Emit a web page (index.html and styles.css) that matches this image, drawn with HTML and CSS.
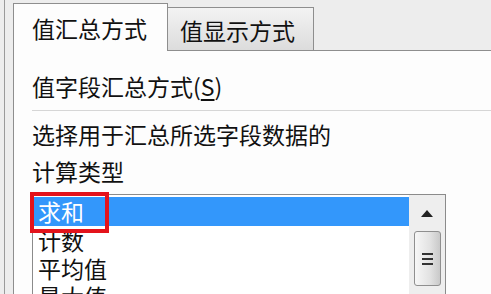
FILE: index.html
```html
<!DOCTYPE html>
<html lang="zh-CN">
<head>
    <meta charset="UTF-8">
    <title>值字段设置</title>
    <link rel="stylesheet" href="styles.css">
</head>
<body>

    <div class="window">
        <div class="tabs">
            <div class="tab tab-active">值汇总方式</div>
            <div class="tab tab-off">值显示方式</div>
            <div class="tab-fill"></div>
        </div>

        <div class="panel">
            <div class="label">值字段汇总方式(<u>S</u>)</div>
            <div class="sep"></div>
            <div class="desc">选择用于汇总所选字段数据的<br>计算类型</div>

            <div class="listbox">
                <div class="items">
                    <div class="item selected">求和</div>
                    <div class="item">计数</div>
                    <div class="item">平均值</div>
                    <div class="item">最大值</div>
                </div>
                <div class="scrollbar">
                    <div class="arrow-up">
                        <svg width="12" height="7" viewBox="0 0 12 7"><path d="M0 7 L6 0 L12 7 Z" fill="#222"/></svg>
                    </div>
                    <div class="thumb">
                        <span></span><span></span><span></span>
                    </div>
                </div>
                <div class="mark"></div>
            </div>
        </div>
    </div>

</body>
</html>
```

FILE: styles.css
```css
body {
    margin: 0;
    padding: 0;
    background-color: #ededed;
    font-family: "Microsoft YaHei", "Noto Sans CJK SC", sans-serif;
    font-size: 23px;
    color: #111;
    width: 491px;
    height: 294px;
    overflow: hidden;
}

.window {
    margin-left: 4px;
    border-left: 1px solid #9a9a9a;
    padding-left: 8px;
    height: 294px;
    display: flex;
    flex-direction: column;
}

.tabs {
    display: flex;
    align-items: flex-end;
    padding-top: 3px;
    height: 48px;
}

.tab {
    box-sizing: border-box;
    line-height: 1;
}

.tab-active {
    width: 155px;
    height: 48px;
    border: 1px solid #8e8e8e;
    border-bottom: none;
    background-color: #fdfdfd;
    padding: 13px 0 0 18px;
}

.tab-off {
    width: 146px;
    height: 44px;
    border-top: 1px solid #8e8e8e;
    border-right: 1px solid #8e8e8e;
    border-bottom: 1px solid #8e8e8e;
    background: linear-gradient(#f3f3f3, #dcdcdc);
    padding: 11px 0 0 12px;
}

.tab-fill {
    flex: 1;
    border-bottom: 1px solid #8e8e8e;
}

.panel {
    flex: 1;
    background-color: #fdfdfd;
    border-left: 1px solid #8e8e8e;
    padding: 20px 0 0 18px;
}

.label {
    line-height: 30px;
    height: 30px;
}

.label u {
    text-underline-offset: 3px;
}

.sep {
    height: 1px;
    background-color: #d6d6d6;
    margin-top: 9px;
}

.desc {
    line-height: 37px;
    margin-top: 5px;
}

.listbox {
    position: relative;
    width: 414px;
    height: 120px;
    box-sizing: border-box;
    border: 1px solid #8b8b8b;
    margin-top: 4px;
    display: flex;
    background-color: #fff;
}

.items {
    flex: 1;
    padding: 2px 0 0 1px;
}

.item {
    height: 28px;
    line-height: 28px;
    padding-left: 4px;
}

.item.selected {
    height: 29px;
    background-color: #3397fb;
    color: #fff;
}

.scrollbar {
    width: 36px;
    background-color: #eeeeee;
    display: flex;
    flex-direction: column;
    align-items: center;
}

.arrow-up {
    height: 36px;
    display: flex;
    align-items: center;
    justify-content: center;
}

.thumb {
    width: 27px;
    height: 55px;
    box-sizing: border-box;
    border: 1px solid #8f8f8f;
    border-radius: 3px;
    background: linear-gradient(to right, #f7f7f7, #e2e2e2 60%, #c9c9c9);
    display: flex;
    flex-direction: column;
    align-items: center;
    justify-content: center;
    gap: 3px;
}

.thumb span {
    display: block;
    width: 11px;
    height: 2px;
    background-color: #333;
}

.mark {
    position: absolute;
    left: -3px;
    top: -3px;
    width: 79px;
    height: 41px;
    box-sizing: border-box;
    border: 4px solid #e3131b;
}
```
